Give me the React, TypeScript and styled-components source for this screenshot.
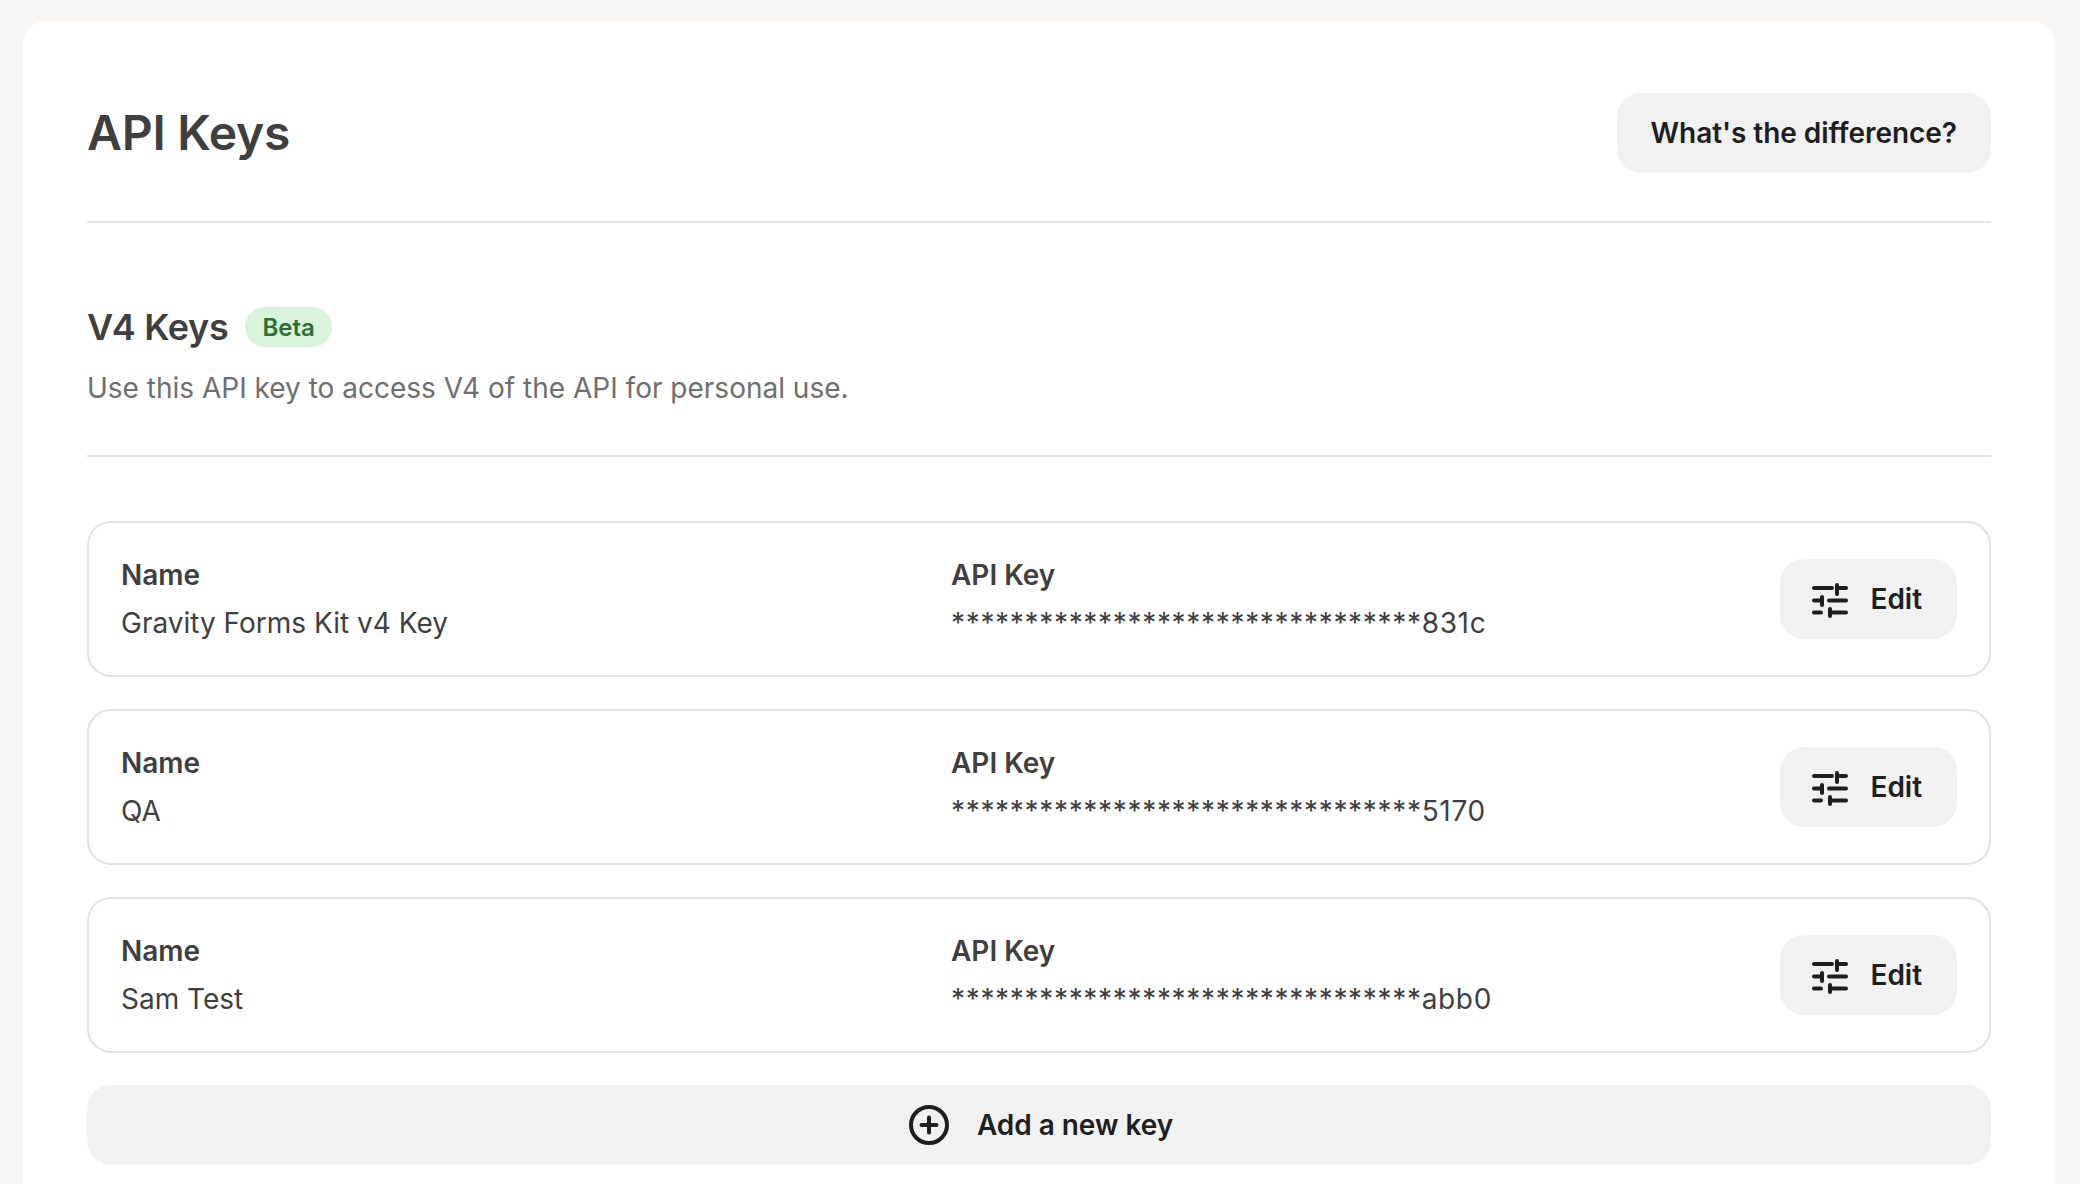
import React from "react";
import styled, { createGlobalStyle } from "styled-components";

const keys = [
    { name: "Gravity Forms Kit v4 Key", suffix: "831c" },
    { name: "QA", suffix: "5170" },
    { name: "Sam Test", suffix: "abb0" },
];

const mask = "*".repeat(32);

function SlidersIcon() {
    return (
        <svg width="40" height="40" viewBox="0 0 40 40" fill="none" stroke="#1e1e1e" strokeWidth="4" strokeLinecap="round">
            <path d="M4 9h18M27 6v9M27 9h9" />
            <path d="M4 21.5h6M12 18v8M19 21.5h17" />
            <path d="M4 33.5h7M20 30v7M20 33.5h16" />
        </svg>
    );
}

function PlusCircleIcon() {
    return (
        <svg width="40" height="40" viewBox="0 0 40 40" fill="none" stroke="#1e1e1e" strokeWidth="4" strokeLinecap="round">
            <circle cx="20" cy="20" r="18" />
            <path d="M20 12.5v15M12.5 20h15" />
        </svg>
    );
}

function App() {
    return (
        <>
            <GlobalStyle />
            <Card>
                <Header>
                    <Title>API Keys</Title>
                    <SoftButton>What's the difference?</SoftButton>
                </Header>

                <Section>
                    <SectionTitle>
                        <h2>V4 Keys</h2>
                        <Badge>Beta</Badge>
                    </SectionTitle>
                    <p>Use this API key to access V4 of the API for personal use.</p>
                </Section>

                <KeyList>
                    {keys.map((key) => (
                        <KeyRow key={key.suffix}>
                            <Field>
                                <dt>Name</dt>
                                <dd>{key.name}</dd>
                            </Field>
                            <Field>
                                <dt>API Key</dt>
                                <dd><MaskedKey>{mask}{key.suffix}</MaskedKey></dd>
                            </Field>
                            <EditButton>
                                <SlidersIcon />
                                Edit
                            </EditButton>
                        </KeyRow>
                    ))}
                    <AddButton>
                        <PlusCircleIcon />
                        Add a new key
                    </AddButton>
                </KeyList>
            </Card>
        </>
    );
}

const GlobalStyle = createGlobalStyle`
    html, body {
        margin: 0;
        height: 1184px;
        overflow: hidden;
        background: #f7f6f4;
        font-family: Inter, "Liberation Sans", sans-serif;
        color: #3f3f3f;
    }
`;

const Card = styled.main`
    margin: 21px 25px 0 23px;
    padding: 72px 64px 64px;
    height: 1400px;
    box-sizing: border-box;
    background: #fff;
    border-radius: 24px;
`;

const Header = styled.header`
    display: flex;
    justify-content: space-between;
    align-items: center;
    padding-bottom: 48px;
    border-bottom: 2px solid #e3e3e3;
`;

const Title = styled.h1`
    margin: 0;
    font-size: 48px;
    font-weight: 600;
    line-height: 80px;
    letter-spacing: -0.25px;
`;

const SoftButton = styled.button`
    display: flex;
    align-items: center;
    justify-content: center;
    height: 80px;
    padding: 0 34px;
    border: 0;
    border-radius: 24px;
    background: #f1f1f1;
    color: #1e1e1e;
    font-family: inherit;
    font-size: 28px;
    font-weight: 600;
    letter-spacing: -0.04px;
`;

const Section = styled.section`
    padding: 84px 0 43px;
    border-bottom: 2px solid #e3e3e3;
    p {
        margin: 17px 0 0;
        font-size: 28px;
        line-height: 48px;
        color: #6e6e6e;
    }
`;

const SectionTitle = styled.div`
    display: flex;
    align-items: center;
    gap: 17px;
    h2 {
        margin: 0;
        font-size: 36px;
        font-weight: 600;
        line-height: 40px;
        letter-spacing: -0.3px;
    }
`;

const Badge = styled.span`
    display: inline-flex;
    align-items: center;
    height: 40px;
    padding: 0 17px;
    border-radius: 20px;
    background: #d7f3da;
    color: #2e6e35;
    font-size: 24px;
    font-weight: 600;
`;

const KeyList = styled.div`
    display: flex;
    flex-direction: column;
    gap: 32px;
    margin-top: 64px;
`;

const KeyRow = styled.div`
    display: grid;
    grid-template-columns: 830px 1fr auto;
    align-items: center;
    height: 156px;
    box-sizing: border-box;
    padding: 0 32px;
    border: 2px solid #e3e3e3;
    border-radius: 24px;
`;

const Field = styled.dl`
    margin: 0;
    font-size: 28px;
    line-height: 48px;
    dt {
        font-weight: 600;
    }
    dd {
        margin: 0;
    }
`;

const MaskedKey = styled.span`
    letter-spacing: 0.68px;
`;

const EditButton = styled(SoftButton)`
    gap: 21px;
    padding: 0 35px 0 30px;
`;

const AddButton = styled(SoftButton)`
    gap: 28px;
    width: 100%;
    padding-left: 38px;
`;

export default App;
